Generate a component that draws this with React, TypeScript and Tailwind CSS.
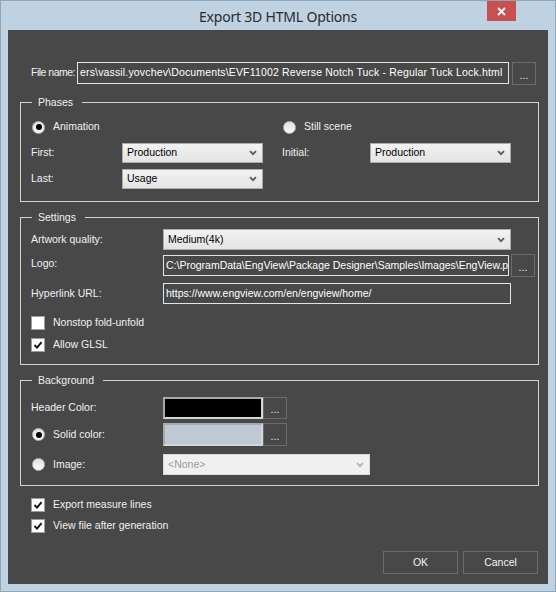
import React from "react";

const Chevron = ({ light }: { light?: boolean }) => (
  <svg width="8" height="6" viewBox="0 0 8 6" className="shrink-0">
    <path
      d="M1 1.2 L4 4.2 L7 1.2"
      fill="none"
      stroke={light ? "#b4b4b4" : "#5e5e5e"}
      strokeWidth="1.9"
    />
  </svg>
);

function Select({
  value,
  className,
  disabled,
}: {
  value: string;
  className: string;
  disabled?: boolean;
}) {
  return (
    <div
      className={
        "flex items-center justify-between pl-[4px] pr-[5px] border " +
        (disabled
          ? "border-[#d9d9d9] bg-[#f0f0f0] text-[#9c9c9c] "
          : "border-[#acacac] bg-gradient-to-b from-[#f2f2f2] to-[#e4e4e4] text-black ") +
        className
      }
    >
      <span className="whitespace-nowrap">{value}</span>
      <Chevron light={disabled} />
    </div>
  );
}

function Radio({ checked }: { checked?: boolean }) {
  return (
    <div className="ml-[1px] w-[13px] h-[13px] rounded-full border border-[#b8b8b8] bg-gradient-to-b from-[#e2e2e2] to-[#fafafa] flex items-center justify-center shrink-0">
      {checked && <div className="w-[6px] h-[6px] rounded-full bg-black" />}
    </div>
  );
}

function Checkbox({ checked }: { checked?: boolean }) {
  return (
    <div className="w-[14px] h-[14px] border border-[#9e9e9e] bg-white flex items-center justify-center shrink-0">
      {checked && (
        <svg width="10" height="10" viewBox="0 0 10 10">
          <path
            d="M1.5 5 L4 7.6 L8.6 2.2"
            fill="none"
            stroke="#111"
            strokeWidth="1.9"
          />
        </svg>
      )}
    </div>
  );
}

function Dots({ className }: { className: string }) {
  return (
    <div
      className={
        "flex items-center justify-center border border-[#6b6b6b] text-[#e8e8e8] shrink-0 " +
        className
      }
    >
      <span className="mt-[4px]">...</span>
    </div>
  );
}

function TextBox({
  children,
  className,
}: {
  children: React.ReactNode;
  className: string;
}) {
  return (
    <div
      className={
        "flex items-center justify-start overflow-hidden border border-[#e4e4e4] px-[2px] whitespace-nowrap text-white " +
        className
      }
    >
      <span className="shrink-0">{children}</span>
    </div>
  );
}

function Legend({ children }: { children: React.ReactNode }) {
  return (
    <legend className="ml-[1px] pl-[6px] pr-[9px] leading-[15px]">
      {children}
    </legend>
  );
}

export default function App() {
  return (
    <div className="w-[556px] h-[592px] bg-[#bfd2e2] border border-[#8fa5b8] flex flex-col font-['Liberation_Sans',Arial,sans-serif] text-[10.5px] text-[#f0f0f0] select-none">
      <div className="relative h-[29px] shrink-0 flex items-center justify-center">
        <span className="font-['Noto_Sans',sans-serif] text-[14px] text-[#2a2a2a] tracking-[-0.2px] mt-[1px]">
          Export 3D HTML Options
        </span>
        <div className="absolute right-[39px] top-0 w-[29px] h-[20px] bg-[#c75050] flex items-center justify-center">
          <svg width="9" height="9" viewBox="0 0 9 9">
            <path d="M1 1 L8 8 M8 1 L1 8" stroke="white" strokeWidth="1.8" />
          </svg>
        </div>
      </div>

      <div className="mx-[7px] mb-[7px] flex-1 bg-[#484848] flex flex-col">
        {/* File name */}
        <div className="mt-[32px] ml-[23px] flex items-start h-[23px]">
          <div className="w-[46px] shrink-0 h-[22px] flex items-center whitespace-nowrap tracking-[-0.5px]">
            File name:
          </div>
          <TextBox className="w-[432px] h-[22px] tracking-[0.16px]">
            ers\vassil.yovchev\Documents\EVF11002 Reverse Notch Tuck - Regular Tuck Lock.html
          </TextBox>
          <Dots className="ml-[3px] w-[24px] h-[23px]" />
        </div>

        {/* Phases */}
        <fieldset className="mt-[10px] ml-[12px] w-[519px] border border-[#d4d4d4] pl-[10px] pb-[12px]">
          <Legend>Phases</Legend>
          <div className="grid grid-cols-[251px_1fr]">
            <div className="mt-[9px] h-[16px] flex items-center">
              <Radio checked />
              <span className="ml-[8px]">Animation</span>
            </div>
            <div className="mt-[9px] h-[16px] flex items-center">
              <Radio />
              <span className="ml-[8px]">Still scene</span>
            </div>

            <div className="mt-[8px] h-[20px] flex items-center">
              <span className="w-[91px]">First:</span>
              <Select value="Production" className="w-[141px] h-[20px]" />
            </div>
            <div className="mt-[8px] h-[20px] flex items-center">
              <span className="w-[88px]">Initial:</span>
              <Select value="Production" className="w-[141px] h-[20px]" />
            </div>

            <div className="mt-[6px] h-[20px] flex items-center">
              <span className="w-[91px]">Last:</span>
              <Select value="Usage" className="w-[141px] h-[20px]" />
            </div>
            <div />
          </div>
        </fieldset>

        {/* Settings */}
        <fieldset className="mt-[8px] ml-[12px] w-[519px] border border-[#d4d4d4] pl-[10px] pb-[12px]">
          <Legend>Settings</Legend>
          <div className="mt-[4px] h-[21px] flex items-center">
            <span className="w-[132px]">Artwork quality:</span>
            <Select value="Medium(4k)" className="w-[348px] h-[21px]" />
          </div>
          <div className="mt-[4px] h-[23px] flex items-center">
            <span className="w-[132px] -mt-[3px]">Logo:</span>
            <TextBox className="w-[346px] h-[21px]">
              C:\ProgramData\EngView\Package Designer\Samples\Images\EngView.png
            </TextBox>
            <Dots className="ml-[2px] w-[24px] h-[23px]" />
          </div>
          <div className="mt-[6px] h-[21px] flex items-center">
            <span className="w-[132px]">Hyperlink URL:</span>
            <TextBox className="w-[348px] h-[21px]">
              https://www.engview.com/en/engview/home/
            </TextBox>
          </div>
          <div className="mt-[12px] h-[14px] flex items-center">
            <Checkbox />
            <span className="ml-[8px]">Nonstop fold-unfold</span>
          </div>
          <div className="mt-[8px] h-[14px] flex items-center">
            <Checkbox checked />
            <span className="ml-[8px]">Allow GLSL</span>
          </div>
        </fieldset>

        {/* Background */}
        <fieldset className="mt-[8px] ml-[12px] w-[519px] border border-[#d4d4d4] pl-[10px] pb-[10px]">
          <Legend>Background</Legend>
          <div className="mt-[9px] h-[22px] flex items-center">
            <span className="w-[132px]">Header Color:</span>
            <div className="w-[100px] h-[22px] bg-black border-2 border-[#d6d6d6] border-t-[#a9a9a9] border-l-[#a9a9a9]" />
            <Dots className="w-[24px] h-[22px]" />
          </div>
          <div className="mt-[4px] h-[23px] flex items-center">
            <div className="w-[132px] flex items-center">
              <Radio checked />
              <span className="ml-[8px]">Solid color:</span>
            </div>
            <div className="w-[100px] h-[23px] bg-[#bfc9d6] border-2 border-[#d6d6d6] border-t-[#a9a9a9] border-l-[#a9a9a9]" />
            <Dots className="w-[24px] h-[23px]" />
          </div>
          <div className="mt-[8px] h-[21px] flex items-center">
            <div className="w-[132px] flex items-center">
              <Radio />
              <span className="ml-[8px]">Image:</span>
            </div>
            <Select value="<None>" className="w-[207px] h-[21px]" disabled />
          </div>
        </fieldset>

        <div className="mt-[12px] ml-[23px] h-[14px] flex items-center">
          <Checkbox checked />
          <span className="ml-[8px]">Export measure lines</span>
        </div>
        <div className="mt-[7px] ml-[23px] h-[14px] flex items-center">
          <Checkbox checked />
          <span className="ml-[8px]">View file after generation</span>
        </div>

        <div className="mt-auto mb-[10px] mr-[10px] self-end flex gap-[5px]">
          <div className="w-[75px] h-[23px] border border-[#6b6b6b] flex items-center justify-center text-[#f2f2f2]">
            OK
          </div>
          <div className="w-[75px] h-[23px] border border-[#6b6b6b] flex items-center justify-center text-[#f2f2f2]">
            Cancel
          </div>
        </div>
      </div>
    </div>
  );
}
